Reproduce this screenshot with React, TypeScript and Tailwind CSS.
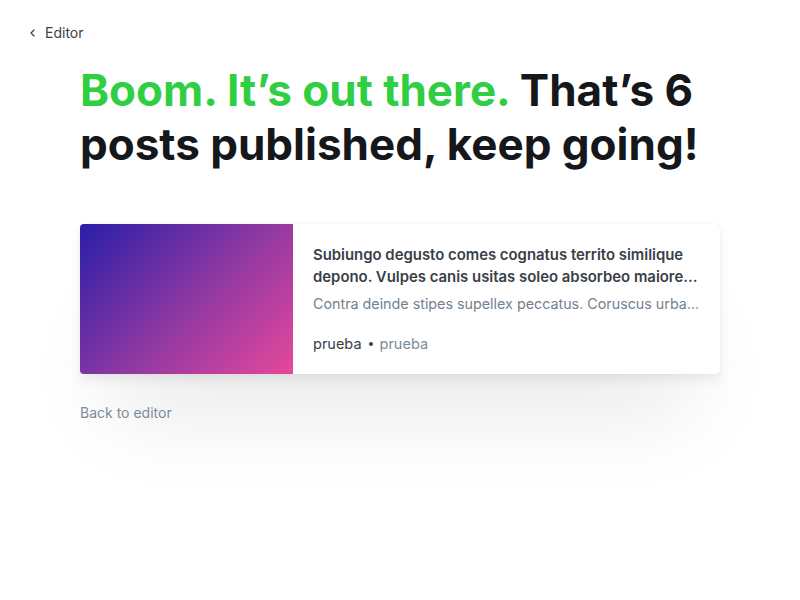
import React from "react";

export default function App() {
  return (
    <div className="min-h-[600px] w-full bg-white text-[#15171a]" style={{ fontFamily: "Inter, 'Noto Sans', sans-serif" }}>
      <div className="flex items-center pl-[28px] pt-[23px] h-[20px] box-content">
        <svg width="10" height="10" viewBox="0 0 10 10" className="mr-[7px]" fill="none" stroke="#394047" strokeWidth="1.3" strokeLinecap="round" strokeLinejoin="round">
          <path d="M6 2 L3 5 L6 8" />
        </svg>
        <span className="text-[14px] leading-[20px] text-[#394047]">Editor</span>
      </div>
      <div className="px-[80px] pt-[20px]">
        <h1 className="text-[44px] leading-[54px] font-bold tracking-normal text-[#15171a] max-w-[640px]">
          <span className="text-[#30cf43]">Boom. It’s out there.</span> That’s 6 posts published, keep going!
        </h1>
        <div className="mt-[53px] flex h-[150px] w-[640px] overflow-hidden rounded-[4px] bg-white shadow-[0_0_1px_rgba(0,0,0,0.15),0_6px_12px_rgba(0,0,0,0.07),0_70px_90px_-30px_rgba(0,0,0,0.09)]">
          <div className="w-[213px] shrink-0 bg-[linear-gradient(135deg,#2a1fa8_0%,#8a37a3_50%,#e5489b_100%)]" />
          <div className="flex min-w-0 flex-1 flex-col px-[20px] pt-[20px]">
            <div className="text-[14.9px] leading-[22px] font-semibold text-[#394047] line-clamp-2">
              Subiungo degusto comes cognatus territo similique depono. Vulpes canis usitas soleo absorbeo maiores amplus.
            </div>
            <div className="mt-[5px] truncate text-[14.3px] leading-[22px] text-[#738190]">
              Contra deinde stipes supellex peccatus. Coruscus urbanus depromo summopere.
            </div>
            <div className="mt-[18px] flex items-center text-[14.5px] leading-[22px]">
              <span className="text-[#394047]">prueba</span>
              <span className="mx-[7px] h-[4px] w-[4px] rounded-full bg-[#394047]" />
              <span className="text-[#7c8b9a]">prueba</span>
            </div>
          </div>
        </div>
        <div className="mt-[29px] text-[14px] leading-[20px] text-[#7c8b9a]">Back to editor</div>
      </div>
    </div>
  );
}
